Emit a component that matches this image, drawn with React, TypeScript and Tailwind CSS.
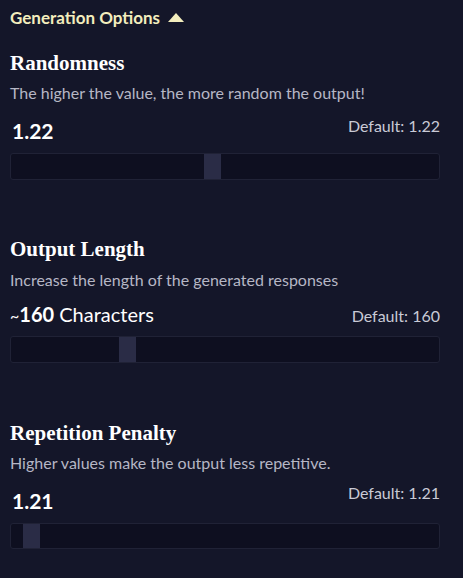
import React from "react";

const sans = { fontFamily: "Lato, 'Open Sans', sans-serif" };
const serif = { fontFamily: "'Liberation Serif', 'DejaVu Serif', serif" };

function Slider({ pos, h }: { pos: number; h: string }) {
  return (
    <div className={`relative w-full rounded-[3px] border border-[#202236] bg-[#0e0f20] ${h}`}>
      <div
        className="absolute top-0 h-full w-[17px] bg-[#2a2c46]"
        style={{ left: pos }}
      />
    </div>
  );
}

export default function App() {
  return (
    <div className="min-h-[578px] w-[463px] bg-[#141629] pl-[10px] pr-[23px] pt-[7px] text-white" style={sans}>
      <div className="flex h-[22px] items-center gap-[7px] text-[17px] font-bold text-[#f3edbd]">
        <span>Generation Options</span>
        <svg width="18" height="11" viewBox="0 0 18 11" className="mt-[-2px]">
          <path d="M9 1 L17 10 L1 10 Z" fill="#f3edbd" />
        </svg>
      </div>

      {/* Randomness */}
      <div className="mt-[21px]">
        <div className="text-[21px] font-bold leading-[26px]" style={serif}>Randomness</div>
        <div className="mt-[6px] text-[16px] leading-[22px] text-[#b6b7c5]">The higher the value, the more random the output!</div>
        <div className="mt-[12px] flex items-start justify-between">
          <span className="mt-[2px] pl-[2px] text-[21px] font-bold leading-[26px]">1.22</span>
          <span className="text-[16px] leading-[20px] text-[#c9cad6]">Default: 1.22</span>
        </div>
        <div className="mt-[9px]">
          <Slider pos={193} h="h-[27px]" />
        </div>
      </div>

      {/* Output Length */}
      <div className="mt-[56px]">
        <div className="text-[21px] font-bold leading-[26px]" style={serif}>Output Length</div>
        <div className="mt-[7px] text-[16px] leading-[22px] text-[#b6b7c5]">Increase the length of the generated responses</div>
        <div className="mt-[10px] flex items-start justify-between">
          <span className="text-[20px] leading-[26px]">
            <span className="text-[16px]">~</span>
            <span className="font-bold">160</span> Characters
          </span>
          <span className="mt-[5px] text-[16px] leading-[20px] text-[#c9cad6]">Default: 160</span>
        </div>
        <div className="mt-[7px]">
          <Slider pos={108} h="h-[27px]" />
        </div>
      </div>

      {/* Repetition Penalty */}
      <div className="mt-[57px]">
        <div className="text-[21px] font-bold leading-[26px]" style={serif}>Repetition Penalty</div>
        <div className="mt-[6px] text-[16px] leading-[22px] text-[#b6b7c5]">Higher values make the output less repetitive.</div>
        <div className="mt-[9px] flex items-start justify-between">
          <span className="mt-[5px] pl-[2px] text-[21px] font-bold leading-[26px]">1.21</span>
          <span className="text-[16px] leading-[20px] text-[#c9cad6]">Default: 1.21</span>
        </div>
        <div className="mt-[9px]">
          <Slider pos={12} h="h-[26px]" />
        </div>
      </div>
    </div>
  );
}
